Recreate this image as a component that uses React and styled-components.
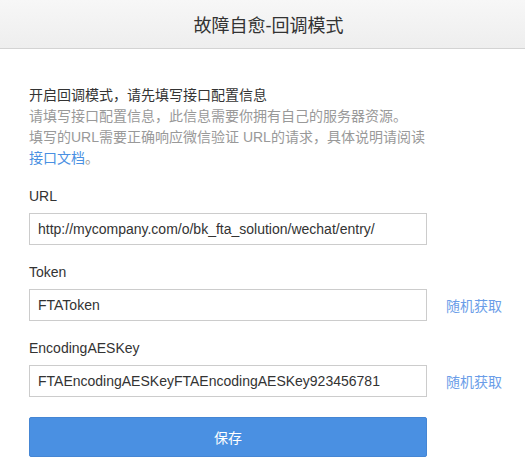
import React from 'react';
import styled, { createGlobalStyle } from 'styled-components';

const GlobalStyle = createGlobalStyle`
  html, body {
    margin: 0;
    padding: 0;
    background: #fff;
  }
  body {
    font-family: "Liberation Sans", Arial, "Noto Sans CJK SC", sans-serif;
    font-size: 14px;
    color: #333;
  }
`

const Page = styled.div`
  width: 525px;
  min-height: 467px;
  background: #fff;
`

const Header = styled.div`
  height: 48px;
  padding-left: 12px;
  border-bottom: 1px solid #d3d3d3;
  background: linear-gradient(#f7f7f7, #eeeeee);
  display: flex;
  align-items: center;
  justify-content: center;
  font-size: 18px;
  color: #333;
`

const Body = styled.div`
  padding: 36px 0 0 29px;
`

const Intro = styled.div`
  line-height: 21px;
  margin-bottom: 17px;
`

const IntroTitle = styled.div`
  color: #333;
`

const IntroText = styled.div`
  color: #999;
`

const DocLink = styled.a`
  color: #4a90e2;
  text-decoration: none;
`

const Field = styled.div`
  margin-bottom: ${props => props.last ? '20px' : '17px'};
`

const Label = styled.div`
  line-height: 20px;
  margin-bottom: 7px;
  color: #333;
`

const Row = styled.div`
  display: flex;
  align-items: center;
`

const Input = styled.input`
  box-sizing: border-box;
  width: 398px;
  height: 32px;
  border: 1px solid #ccc;
  padding: 0 8px;
  font-family: inherit;
  font-size: 14px;
  color: #333;
  outline: none;
  margin: 0;
`

const RandomLink = styled.a`
  margin-left: 19px;
  color: #6a9de8;
  text-decoration: none;
  cursor: pointer;
`

const SaveButton = styled.button`
  box-sizing: border-box;
  width: 398px;
  height: 40px;
  background: #4a90e2;
  border: 1px solid #4586d4;
  border-radius: 2px;
  color: #fff;
  font-family: inherit;
  font-size: 14px;
  cursor: pointer;
`

const App = () => {
    return (
        <Page>
            <GlobalStyle />
            <Header>故障自愈-回调模式</Header>
            <Body>
                <Intro>
                    <IntroTitle>开启回调模式，请先填写接口配置信息</IntroTitle>
                    <IntroText>请填写接口配置信息，此信息需要你拥有自己的服务器资源。</IntroText>
                    <IntroText>填写的URL需要正确响应微信验证 URL的请求，具体说明请阅读</IntroText>
                    <IntroText><DocLink href="#">接口文档</DocLink>。</IntroText>
                </Intro>

                <Field>
                    <Label>URL</Label>
                    <Row>
                        <Input defaultValue="http://mycompany.com/o/bk_fta_solution/wechat/entry/" />
                    </Row>
                </Field>

                <Field>
                    <Label>Token</Label>
                    <Row>
                        <Input defaultValue="FTAToken" />
                        <RandomLink>随机获取</RandomLink>
                    </Row>
                </Field>

                <Field last>
                    <Label>EncodingAESKey</Label>
                    <Row>
                        <Input defaultValue="FTAEncodingAESKeyFTAEncodingAESKey923456781" />
                        <RandomLink>随机获取</RandomLink>
                    </Row>
                </Field>

                <SaveButton type="button">保存</SaveButton>
            </Body>
        </Page>
    );
}

export default App;
